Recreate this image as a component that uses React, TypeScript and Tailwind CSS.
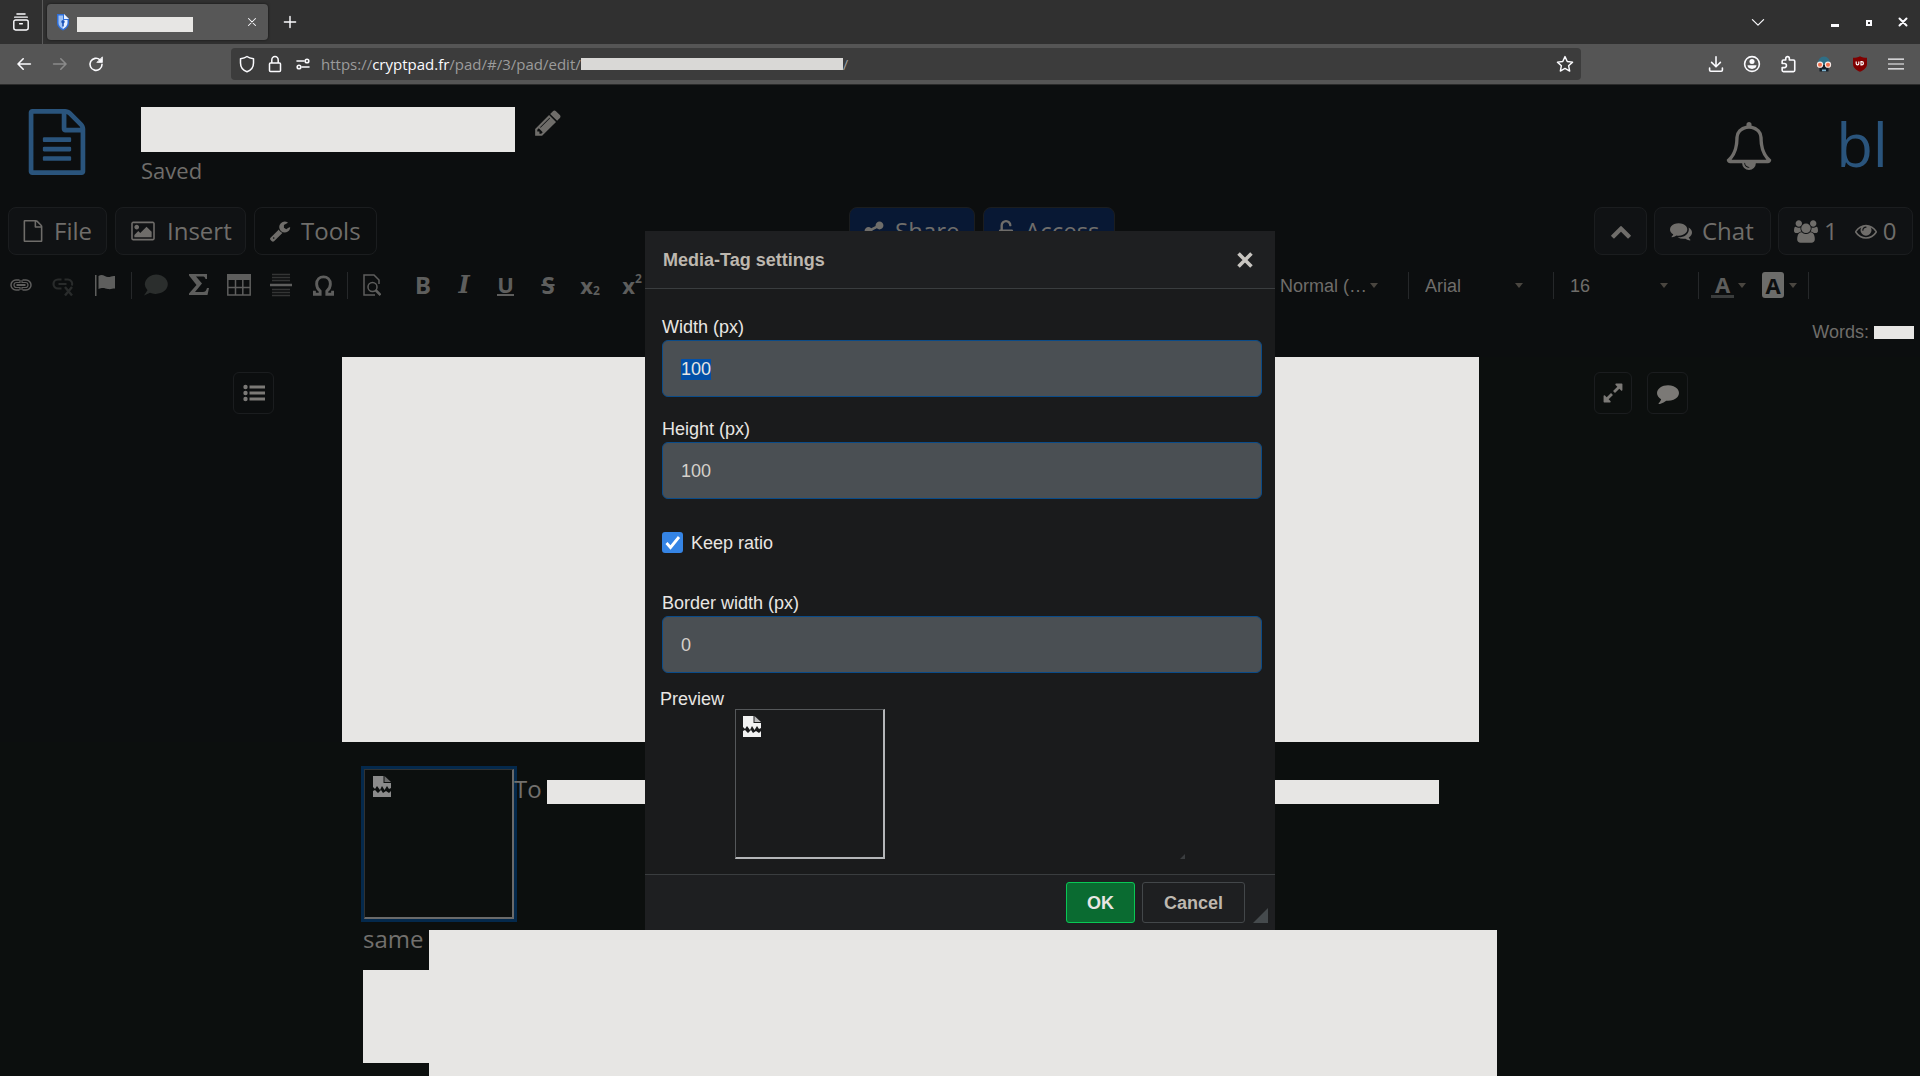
import { useEffect, useRef } from "react";
import type { ReactNode } from "react";

const P = {
  fileText:
    "M1596 380q28 28 48 76t20 88v1152q0 40-28 68t-68 28h-1344q-40 0-68-28t-28-68v-1600q0-40 28-68t68-28h896q40 0 88 20t76 48zm-444-244v376h376q-10-29-22-41l-313-313q-12-12-41-22zm384 1528v-1024h-416q-40 0-68-28t-28-68v-416h-768v1536h1280zm-1024-864q0-14 9-23t23-9h704q14 0 23 9t9 23v64q0 14-9 23t-23 9h-704q-14 0-23-9t-9-23v-64zm736 224q14 0 23 9t9 23v64q0 14-9 23t-23 9h-704q-14 0-23-9t-9-23v-64q0-14 9-23t23-9h704zm0 256q14 0 23 9t9 23v64q0 14-9 23t-23 9h-704q-14 0-23-9t-9-23v-64q0-14 9-23t23-9h704z",
  file: "M1596 380q28 28 48 76t20 88v1152q0 40-28 68t-68 28h-1344q-40 0-68-28t-28-68v-1600q0-40 28-68t68-28h896q40 0 88 20t76 48zm-444-244v376h376q-10-29-22-41l-313-313q-12-12-41-22zm384 1528v-1024h-416q-40 0-68-28t-28-68v-416h-768v1536h1280z",
  bell: "M912 1696q0-16-16-16-59 0-101.5-42.5t-42.5-101.5q0-16-16-16t-16 16q0 73 51.5 124.5t124.5 51.5q16 0 16-16zm-666-288h1300q-266-300-266-832 0-51-24-105t-69-103-121.5-80.5-169.5-31.5-169.5 31.5-121.5 80.5-69 103-24 105q0 532-266 832zm1482 0q0 52-38 90t-90 38h-448q0 106-75 181t-181 75-181-75-75-181h-448q-52 0-90-38t-38-90q50-42 91-88t85-119.5 74.5-158.5 50-206 19.5-260q0-152 117-282.5t307-158.5q-8-19-8-39 0-40 28-68t68-28 68 28 28 68q0 20-8 39 190 28 307 158.5t117 282.5q0 139 19.5 260t50 206 74.5 158.5 85 119.5 91 88z",
  pencil:
    "M491 1536l91-91-235-235-91 91v107h128v128h107zm523-928q0-22-22-22-10 0-17 7l-542 542q-7 7-7 17 0 22 22 22 10 0 17-7l542-542q7-7 7-17zm-54-192l416 416-832 832h-416v-416zm683 96q0 53-37 90l-166 166-416-416 166-165q36-38 90-38 53 0 91 38l235 234q37 39 37 91z",
  picture:
    "M576 576q0 80-56 136t-136 56-136-56-56-136 56-136 136-56 136 56 56 136zm1024 384v448h-1408v-192l320-320 160 160 512-512zm96-704h-1600q-13 0-22.5 9.5t-9.5 22.5v1216q0 13 9.5 22.5t22.5 9.5h1600q13 0 22.5-9.5t9.5-22.5v-1216q0-13-9.5-22.5t-22.5-9.5zm160 32v1216q0 66-47 113t-113 47h-1600q-66 0-113-47t-47-113v-1216q0-66 47-113t113-47h1600q66 0 113 47t47 113z",
  wrench:
    "M448 1472q0-26-19-45t-45-19-45 19-19 45 19 45 45 19 45-19 19-45zm644-420l-682 682q-37 37-90 37-52 0-91-37l-106-108q-38-36-38-90 0-53 38-91l681-681q39 98 114.5 173.5t173.5 114.5zm634-435q0 39-23 106-47 134-164.5 217.5t-258.5 83.5q-185 0-316.5-131.5t-131.5-316.5 131.5-316.5 316.5-131.5q58 0 121.5 16.5t107.5 46.5q16 11 16 28t-16 28l-293 169v224l193 107q5-3 79-48.5t135.5-81 70.5-35.5q15 0 23.5 10t8.5 25z",
  chevronUp:
    "M1683 1331l-166 165q-19 19-45 19t-45-19l-531-531-531 531q-19 19-45 19t-45-19l-166-165q-19-19-19-45.5t19-45.5l742-741q19-19 45-19t45 19l742 741q19 19 19 45.5t-19 45.5z",
  comment:
    "M1792 896q0 174-120 321.5t-326 233-450 85.5q-70 0-145-8-198 175-460 242-49 14-114 22-17 2-30.5-9t-17.5-29v-1q-3-4-.5-12t2-10 4.5-9.5l6-9 7-8.5 8-9q7-8 31-34.5t34.5-38 31-39.5 32.5-51 27-59 26-76q-157-89-247.5-220t-90.5-281q0-130 71-248.5t191-204.5 286-136.5 348-50.5q244 0 450 85.5t326 233 120 321.5z",
  comments:
    "M1408 768q0 139-94 257t-256.5 186.5-353.5 68.5q-86 0-176-16-124 88-278 128-36 9-86 16h-3q-11 0-20.5-8t-11.5-21q-1-3-1-6.5t.5-6.5 2-6l2.5-5 3.5-5.5 4-5 4.5-5 4-4.5q5-6 23-25t26-29.5 22.5-29 25-38.5 20.5-44q-124-72-195-177t-71-224q0-139 94-257t256.5-186.5 353.5-68.5 353.5 68.5 256.5 186.5 94 257zm384 256q0 120-71 224.5t-195 176.5q10 24 20.5 44t25 38.5 22.5 29 26 29.5 23 25q1 1 4 4.5t4.5 5 4 5 3.5 5.5l2.5 5 2 6 .5 6.5-1 6.5q-3 14-13 22t-22 7q-50-7-86-16-154-40-278-128-90 16-176 16-271 0-472-132 58 4 88 4 161 0 309-45t264-129q125-92 192-212t67-254q0-77-23-152 129 71 204 178t75 230z",
  eye: "M1664 960q-152-236-381-353 61 104 61 225 0 185-131.5 316.5t-316.5 131.5-316.5-131.5-131.5-316.5q0-121 61-225-229 117-381 353 133 205 333.5 326.5t434.5 121.5 434.5-121.5 333.5-326.5zm-720-384q0-20-14-34t-34-14q-125 0-214.5 89.5t-89.5 214.5q0 20 14 34t34 14 34-14 14-34q0-86 61-147t147-61q20 0 34-14t14-34zm848 384q0 34-20 69-140 230-376.5 368.5t-499.5 138.5-499.5-139-376.5-368q-20-35-20-69t20-69q140-229 376.5-368t499.5-139 499.5 139 376.5 368q20 35 20 69z",
  users:
    "M593 896q-162 5-265 128h-134q-82 0-138-40.5t-56-118.5q0-353 124-353 6 0 43.5 21t97.5 42.5 119 21.5q67 0 133-23-5 37-5 66 0 139 81 256zm1071 637q0 120-73 189.5t-194 69.5h-874q-121 0-194-69.5t-73-189.5q0-53 3.5-103.5t14-109 26.5-108.5 43-97.5 62-81 85.5-53.5 111.5-20q10 0 43 21.5t73 48 107 48 135 21.5 135-21.5 107-48 73-48 43-21.5q61 0 111.5 20t85.5 53.5 62 81 43 97.5 26.5 108.5 14 109 3.5 103.5zm-1024-1277q0 106-75 181t-181 75-181-75-75-181 75-181 181-75 181 75 75 181zm704 384q0 159-112.5 271.5t-271.5 112.5-271.5-112.5-112.5-271.5 112.5-271.5 271.5-112.5 271.5 112.5 112.5 271.5zm576 225q0 78-56 118.5t-138 40.5h-134q-103-123-265-128 81-117 81-256 0-29-5-66 66 23 133 23 59 0 119-21.5t97.5-42.5 43.5-21q124 0 124 353zm-128-609q0 106-75 181t-181 75-181-75-75-181 75-181 181-75 181 75 75 181z",
  expand:
    "M883 1056q0 13-10 23l-332 332 144 144q19 19 19 45t-19 45-45 19h-448q-26 0-45-19t-19-45v-448q0-26 19-45t45-19 45 19l144 144 332-332q10-10 23-10t23 10l114 114q10 10 10 23zm781-864v448q0 26-19 45t-45 19-45-19l-144-144-332 332q-10 10-23 10t-23-10l-114-114q-10-10-10-23t10-23l332-332-144-144q-19-19-19-45t19-45 45-19h448q26 0 45 19t19 45z",
  share:
    "M1344 1024q133 0 226.5 93.5t93.5 226.5-93.5 226.5-226.5 93.5-226.5-93.5-93.5-226.5q0-12 2-34l-360-180q-92 86-218 86-133 0-226.5-93.5t-93.5-226.5 93.5-226.5 226.5-93.5q126 0 218 86l360-180q-2-22-2-34 0-133 93.5-226.5t226.5-93.5 226.5 93.5 93.5 226.5-93.5 226.5-226.5 93.5q-126 0-218-86l-360 180q2 22 2 34t-2 34l360 180q92-86 218-86z",
  unlock:
    "M1376 768q40 0 68 28t28 68v576q0 40-28 68t-68 28h-960q-40 0-68-28t-28-68v-576q0-40 28-68t68-28h32v-320q0-185 131.5-316.5t316.5-131.5 316.5 131.5 131.5 316.5q0 26-19 45t-45 19h-64q-26 0-45-19t-19-45q0-106-75-181t-181-75-181 75-75 181v320h736z",
};

function Fa({ d, className, box = "0 0 1792 1792" }: { d: string; className: string; box?: string }) {
  return (
    <svg viewBox={box} className={`shrink-0 fill-current ${className}`} aria-hidden="true">
      <path d={d} />
    </svg>
  );
}

function Line({ children, className = "size-5", w = 1.5 }: { children: ReactNode; className?: string; w?: number }) {
  return (
    <svg
      viewBox="0 0 20 20"
      className={`shrink-0 ${className}`}
      fill="none"
      stroke="currentColor"
      strokeWidth={w}
      strokeLinecap="round"
      strokeLinejoin="round"
      aria-hidden="true"
    >
      {children}
    </svg>
  );
}

function ChromeBtn({ label, children, className = "w-9" }: { label: string; children: ReactNode; className?: string }) {
  return (
    <button aria-label={label} className={`flex h-9 shrink-0 items-center justify-center ${className}`}>
      {children}
    </button>
  );
}

function BrowserChrome() {
  return (
    <header className="font-['Open_Sans'] text-[#fbfbfe]">
      <div className="flex h-11 items-center bg-[#303030]">
        <ChromeBtn label="Recent browsing" className="w-[42px]">
          <Line className="size-[18px]" w={1.6}>
            <path d="M5.5 1.2h9M3 4.6h14M4 7.8h12a2 2 0 0 1 2 2v7a2 2 0 0 1-2 2H4a2 2 0 0 1-2-2v-7a2 2 0 0 1 2-2zM8.5 12h3" />
          </Line>
        </ChromeBtn>
        <div className="h-full w-px bg-[#5a5a5a]" />
        <div className="ml-1 flex h-9 w-[221px] items-center rounded bg-[#575757] px-2 shadow-[0_0_3px_rgba(0,0,0,0.6)]">
          <svg viewBox="0 0 16 18" className="h-[18px] w-4 shrink-0" aria-hidden="true">
            <path d="M2 1h7l5 5v4c0 3.500-3 6-6 7.500C5 16 2 13.500 2 10z" fill="#2f6fd8" />
            <path d="M3.500 2.500H8V16C5.500 14.500 3.500 12.500 3.500 10z" fill="#9fc2f5" />
            <path d="M9 1v5h5z" fill="#e9f1ff" />
            <path d="M8 7h4.500v3C12.500 12.500 10.500 14.500 8 16z" fill="#e9f1ff" />
            <circle cx="8" cy="8.800" r="1.700" fill="#1d54b8" />
            <path d="M7.200 9.500h1.600v4H7.200z" fill="#1d54b8" />
          </svg>
          <div className="mt-[5px] ml-[6px] h-[15px] w-[116px] bg-[#e7e6e4]" />
          <button aria-label="Close tab" className="ml-auto flex size-4 items-center justify-center">
            <Line className="size-[14px]">
              <path d="M5 5l10 10M15 5L5 15" />
            </Line>
          </button>
        </div>
        <ChromeBtn label="New tab" className="ml-1 w-9">
          <Line className="size-4" w={1.8}>
            <path d="M10 3v14M3 10h14" />
          </Line>
        </ChromeBtn>
        <div className="flex-1" />
        <ChromeBtn label="List all tabs">
          <Line className="size-4">
            <path d="M3 7l7 7 7-7" />
          </Line>
        </ChromeBtn>
        <div className="ml-[42px] flex items-center">
          <ChromeBtn label="Minimize" className="w-[34px]">
            <span className="mt-[6px] block h-[3px] w-2 bg-[#fbfbfe]" />
          </ChromeBtn>
          <ChromeBtn label="Maximize" className="w-[34px]">
            <span className="mt-[2px] block size-[6px] border-2 border-[#fbfbfe]" />
          </ChromeBtn>
          <ChromeBtn label="Close window" className="w-[34px]">
            <Line className="size-[10px]" w={4}>
              <path d="M3 3l14 14M17 3L3 17" />
            </Line>
          </ChromeBtn>
        </div>
      </div>
      <div className="flex h-[41px] items-center border-b border-[#2b2b2b] bg-[#555555] px-1.5">
        <ChromeBtn label="Back">
          <Line className="size-4" w={2}>
            <path d="M18 10H3M9 3.500L2.500 10 9 16.500" />
          </Line>
        </ChromeBtn>
        <ChromeBtn label="Forward">
          <Line className="size-4 text-[#8a8a8a]" w={2}>
            <path d="M2 10h15M11 3.500l6.500 6.500-6.500 6.500" />
          </Line>
        </ChromeBtn>
        <ChromeBtn label="Reload">
          <Line className="size-4" w={2}>
            <path d="M17.500 10.500A7.500 7.500 0 1 1 15 4.800" />
            <path d="M18 1.500v6.500h-6.500z" fill="currentColor" strokeWidth="1" />
          </Line>
        </ChromeBtn>
        <div className="ml-[117px] flex h-8 min-w-0 flex-1 items-center rounded bg-[#3c3c3c] pl-1.5">
          <Line className="size-5" w={1.5}>
            <path d="M10 2.500c2 1.600 4.500 2 6.500 2.200V9c0 4.500-3 7.500-6.500 8.800C6.500 16.500 3.500 13.500 3.500 9V4.700C5.500 4.500 8 4.100 10 2.500z" />
          </Line>
          <Line className="ml-2 size-5" w={1.5}>
            <path d="M5.500 9h9a1 1 0 0 1 1 1v6.500a1 1 0 0 1-1 1h-9a1 1 0 0 1-1-1V10a1 1 0 0 1 1-1zM6.800 9V6a3.200 3.500 0 0 1 6.400 0v3" />
          </Line>
          <Line className="ml-2 size-5" w={1.6}>
            <path d="M4 7h7M9 13h7" />
            <circle cx="14" cy="7" r="1.800" />
            <circle cx="6" cy="13" r="1.800" />
          </Line>
          <div className="ml-2 flex items-center text-[15px] whitespace-nowrap text-[#9b9b9b]">
            <span>https://</span>
            <span className="text-[#fbfbfe]">cryptpad.fr</span>
            <span>/pad/#/3/pad/edit/</span>
            <span className="h-3 w-[262px] bg-[#d9d8d6]" />
            <span>/</span>
          </div>
          <ChromeBtn label="Bookmark this page" className="ml-auto w-8">
            <Line className="size-[18px]" w={1.6}>
              <path d="M10 1.800l2.500 5.400 5.900.7-4.400 4 1.200 5.900L10 14.900l-5.200 2.900L6 11.900l-4.400-4 5.900-.7z" />
            </Line>
          </ChromeBtn>
        </div>
        <div className="ml-[117px] flex">
          <ChromeBtn label="Downloads">
            <Line className="size-4" w={2}>
              <path d="M10 1v12M4.500 8L10 13.500 15.500 8M2 15v2.500A1.500 1.500 0 0 0 3.500 19h13a1.500 1.500 0 0 0 1.500-1.500V15" />
            </Line>
          </ChromeBtn>
          <ChromeBtn label="Account">
            <svg viewBox="0 0 20 20" className="size-[18px]" aria-hidden="true">
              <circle cx="10" cy="10" r="8.200" fill="none" stroke="currentColor" strokeWidth="1.800" />
              <circle cx="10" cy="7.300" r="2.800" fill="currentColor" />
              <path d="M5 11.500h10c0 2.500-2.200 4-5 4s-5-1.500-5-4z" fill="currentColor" />
            </svg>
          </ChromeBtn>
          <ChromeBtn label="Extensions">
            <Line className="size-[18px]" w={1.8}>
              <path d="M7.500 5.500V3.800a2 2 0 0 1 4 0v1.700H16a1.500 1.500 0 0 1 1.500 1.500v10a1.500 1.500 0 0 1-1.500 1.500H5A1.500 1.500 0 0 1 3.500 17v-3H6a2 2 0 0 0 0-4.500H3.500V7A1.500 1.500 0 0 1 5 5.500z" />
            </Line>
          </ChromeBtn>
          <ChromeBtn label="Privacy extension">
            <svg viewBox="0 0 16 16" className="size-4" aria-hidden="true">
              <path d="M1.500 8.500a6.500 8 0 0 1 13 0z" fill="#2f6f86" />
              <path d="M3.500 9h9v6.500h-9z" fill="#15202a" />
              <path d="M6 13.500h4v1.700H6z" fill="#7fb4d0" />
              <circle cx="4" cy="8.700" r="2.600" fill="#f0714f" stroke="#f5e9e6" strokeWidth="1.100" />
              <circle cx="12" cy="8.700" r="2.600" fill="#f0714f" stroke="#f5e9e6" strokeWidth="1.100" />
            </svg>
          </ChromeBtn>
          <ChromeBtn label="uBlock Origin">
            <svg viewBox="0 0 16 16" className="size-4" aria-hidden="true">
              <path d="M8 .3c2 1.200 4.500 1.500 7 1.500V8c0 4-3.500 6.300-7 7.700C4.500 14.300 1 12 1 8V1.800C3.500 1.800 6 1.500 8 .3z" fill="#800000" />
              <path d="M4.200 5.500V7.500a1.300 1.300 0 0 0 2.600 0V5.500" fill="none" stroke="#fff" strokeWidth="1.200" />
              <path d="M9 5.600h.8a1.600 1.600 0 0 1 0 3.200H9z" fill="none" stroke="#fff" strokeWidth="1.200" />
            </svg>
          </ChromeBtn>
          <ChromeBtn label="Application menu">
            <Line className="size-4" w={1.5}>
              <path d="M0 4h20M0 10h20M0 16h20" />
            </Line>
          </ChromeBtn>
        </div>
      </div>
    </header>
  );
}

function PadHeader() {
  return (
    <div className="flex pt-[22px] font-['Open_Sans'] text-[#6f6d6a]">
      <div className="flex w-[141px] shrink-0 pt-0.5 pl-6">
        <Fa d={P.fileText} className="size-[66px] text-[#2a547c]" />
      </div>
      <div>
        <div className="flex">
          <div className="h-[45px] w-[374px] bg-[#e7e6e4]" />
          <button aria-label="Rename" className="ml-[18px] flex h-8 items-center">
            <Fa d={P.pencil} className="size-[30px]" />
          </button>
        </div>
        <p className="mt-[3px] text-[22px] leading-[30px]">Saved</p>
      </div>
      <div className="ml-auto flex h-[77px] items-center pr-8">
        <button aria-label="Notifications">
          <Fa d={P.bell} className="size-12" />
        </button>
        <button className="ml-[63px] pb-1 text-[60px] leading-[60px] text-[#2a547c]">bl</button>
      </div>
    </div>
  );
}

const padBtn =
  "flex h-12 shrink-0 items-center rounded-lg border border-[#1b1d1f] text-2xl whitespace-nowrap";

function PadToolbar() {
  return (
    <div className="flex items-center justify-between pr-[7px] pl-2 font-['Open_Sans'] text-[#6f6d6a]">
      <div className="flex items-center gap-2">
        <button className={`${padBtn} w-[99px] gap-[10px] bg-[#101214] pl-[13px]`}>
          <Fa d={P.file} className="size-[22px]" />
          File
        </button>
        <button className={`${padBtn} w-[131px] gap-3 bg-[#101214] pl-[15px]`}>
          <Fa d={P.picture} box="-64 0 1920 1792" className="h-[22px] w-6" />
          Insert
        </button>
        <button className={`${padBtn} w-[123px] gap-[10px] pl-[14px]`}>
          <Fa d={P.wrench} className="size-[22px]" />
          Tools
        </button>
      </div>
      <div className="mr-[7px] flex gap-2">
        <button className={`${padBtn} w-[126px] gap-[10px] border-[#0a2244] bg-[#081834] pl-[13px]`}>
          <Fa d={P.share} className="size-[22px]" />
          Share
        </button>
        <button className={`${padBtn} w-[132px] gap-2 border-[#0a2244] bg-[#081834] pl-[11px]`}>
          <Fa d={P.unlock} className="size-[22px]" />
          Access
        </button>
      </div>
      <div className="flex justify-end gap-[7px]">
        <button aria-label="Collapse toolbar" className={`${padBtn} w-[53px] justify-center bg-[#101214]`}>
          <Fa d={P.chevronUp} className="size-[22px]" />
        </button>
        <button className={`${padBtn} w-[117px] gap-[10px] bg-[#101214] pl-[15px]`}>
          <Fa d={P.comments} className="size-[22px]" />
          Chat
        </button>
        <button className={`${padBtn} w-[135px] bg-[#101214] pl-[15px]`}>
          <Fa d={P.users} box="0 0 1920 1792" className="mr-[6px] h-[25px] w-6" />
          1
          <Fa d={P.eye} className="mr-[6px] ml-[17px] size-[22px]" />
          0
        </button>
      </div>
    </div>
  );
}

function Tool({ label, children, className = "w-[42px]" }: { label: string; children: ReactNode; className?: string }) {
  return (
    <button aria-label={label} className={`flex h-8 shrink-0 items-center justify-center ${className}`}>
      {children}
    </button>
  );
}

function Sep() {
  return <span className="h-[27px] w-px shrink-0 bg-[#26282a]" />;
}

function Caret() {
  return <span className="block border-x-4 border-t-[5px] border-x-transparent border-t-[#4a4640]" />;
}

function Combo({ label, value, className }: { label: string; value: string; className: string }) {
  return (
    <label className={`flex shrink-0 items-center text-[#6f6d6a] ${className}`}>
      <select aria-label={label} className="min-w-0 flex-1 appearance-none bg-transparent pt-[3px] text-[18px] outline-none">
        <option>{value}</option>
      </select>
      <Caret />
    </label>
  );
}

function EditorToolbar() {
  return (
    <div className="mt-[14px] flex h-8 items-center font-['Liberation_Sans'] text-[#5e5e5d]">
      <Tool label="Link">
        <svg viewBox="0 0 22 12" className="h-3 w-[22px]" fill="none" stroke="currentColor" aria-hidden="true">
          <path d="M9.500 1H6a5 5 0 0 0 0 10h3.500M12.500 1H16a5 5 0 0 1 0 10h-3.500" strokeWidth="1.500" />
          <path d="M10.500 3.500H6.500a2.500 2.500 0 0 0 0 5h4M11.500 3.500h4a2.500 2.500 0 0 1 0 5h-4M10 1v3M12 1v3M10 8v3M12 8v3" strokeWidth="1.200" />
          <path d="M6.500 6h9" strokeWidth="2" />
        </svg>
      </Tool>
      <Tool label="Unlink">
        <svg viewBox="0 0 22 20" className="mt-[6px] h-5 w-[22px] text-[#292b2b]" fill="none" stroke="currentColor" aria-hidden="true">
          <path d="M9.500 1.500H6a4.500 4.500 0 0 0 0 9h3.500M12.500 1.500H16a4.500 4.500 0 0 1 4 6" strokeWidth="2.200" />
          <path d="M6.500 6h8" strokeWidth="2" />
          <path d="M13 9l7 8.500M20 9l-7 8.500" strokeWidth="2.400" />
        </svg>
      </Tool>
      <Tool label="Anchor">
        <svg viewBox="0 0 22 24" className="h-6 w-[22px] fill-current" aria-hidden="true">
          <path d="M1 2h1.500v21H1zM4.500 3c4-3 6.500 1 9.500 1s4-1.500 7-1v12.500c-3 0-4 1-7 .5-3-.6-5-2-9.500 0z" />
        </svg>
      </Tool>
      <span className="ml-[5px]" />
      <Sep />
      <Tool label="Comment" className="w-[48px]">
        <svg viewBox="0 0 24 24" className="size-6 fill-[#2b2e2d]" aria-hidden="true">
          <path d="M12 1.500a12 9.700 0 1 1-6 18.200L0 22.500l3.500-5.300A12 9.700 0 0 1 12 1.500z" />
        </svg>
      </Tool>
      <Tool label="Math" className="w-[38px]">
        <svg viewBox="0 0 20 22" className="h-[22px] w-5 fill-current" aria-hidden="true">
          <path d="M0 0h18v5h-1.500c-.5-2-1.500-2.500-3-2.500H7l6 7-7 8.500h8c2 0 3-1 4-4H20L18.500 21H0v-1.500l7.500-8.500L0 1.500z" />
        </svg>
      </Tool>
      <Tool label="Table">
        <svg viewBox="0 0 24 22" className="h-[22px] w-6" aria-hidden="true">
          <path d="M.8 6V21h22.400V6M.8 13.500h22.400M8.500 6v15M15.800 6v15" fill="none" stroke="currentColor" strokeWidth="1.500" />
          <path d="M0 0h24v6H0z" fill="currentColor" />
        </svg>
      </Tool>
      <Tool label="Horizontal line">
        <svg viewBox="0 0 22 24" className="h-6 w-[22px]" aria-hidden="true">
          <path d="M2 1.500h18M2 4.500h18M2 7.500h18M2 16.500h18M2 19.500h18M2 22.500h18" stroke="#343535" strokeWidth="1.500" />
          <path d="M0 12h22" stroke="currentColor" strokeWidth="2.500" />
        </svg>
      </Tool>
      <Tool label="Special character" className="w-[43px]">
        <svg viewBox="0 0 22 22" className="size-[21px]" fill="none" stroke="currentColor" strokeWidth="3" aria-hidden="true">
          <path d="M1.500 16.500v3.700H7.500V17C5 15 3.800 12.500 3.800 9.500 3.800 5 7 2 11 2s7.200 3 7.200 7.500c0 3-1.200 5.500-3.700 7.500v3.200h6v-3.700" />
        </svg>
      </Tool>
      <span className="ml-[2px]" />
      <Sep />
      <Tool label="Find" className="w-[47px]">
        <svg viewBox="0 0 18 22" className="h-[22px] w-[18px]" fill="none" stroke="currentColor" strokeWidth="1.500" aria-hidden="true">
          <path d="M12 21H1V1h10l5 5v4" />
          <circle cx="9.500" cy="13" r="4.500" strokeWidth="1.500" />
          <path d="M12.500 16l5 5" strokeWidth="2.500" />
        </svg>
      </Tool>
      <Tool label="Bold" className="ml-[7px] w-[42px]">
        <b className="font-['Noto_Sans'] text-2xl leading-6">B</b>
      </Tool>
      <Tool label="Italic" className="w-[40px]">
        <b className="font-['DejaVu_Serif'] text-[24px] leading-6 italic">I</b>
      </Tool>
      <Tool label="Underline" className="w-[43px]">
        <b className="border-b-2 border-current font-['Noto_Sans'] text-[22px] leading-[20px]">U</b>
      </Tool>
      <Tool label="Strike">
        <b className="font-['Noto_Sans'] text-2xl leading-6 line-through decoration-2">S</b>
      </Tool>
      <Tool label="Subscript">
        <b className="flex items-end font-['Noto_Sans'] text-[22px] leading-6">
          x<span className="text-xs leading-3">2</span>
        </b>
      </Tool>
      <Tool label="Superscript">
        <b className="flex items-start font-['Noto_Sans'] text-[22px] leading-6">
          x<span className="text-xs leading-3">2</span>
        </b>
      </Tool>
      <span className="flex-1" />
      <Combo label="Paragraph format" value="Normal (…" className="w-[98px]" />
      <span className="ml-[30px]" />
      <Sep />
      <Combo label="Font name" value="Arial" className="ml-4 w-[98px]" />
      <span className="ml-[30px]" />
      <Sep />
      <Combo label="Font size" value="16" className="ml-4 w-[98px]" />
      <span className="ml-[30px]" />
      <Sep />
      <button aria-label="Text color" className="ml-3 flex items-center gap-[4px]">
        <span className="flex w-[23px] flex-col items-center">
          <b className="font-['Noto_Sans'] text-[22px] leading-[22px]">A</b>
          <span className="h-[3px] w-full bg-[#3a3c3c]" />
        </span>
        <Caret />
      </button>
      <button aria-label="Background color" className="ml-4 flex items-center gap-[5px]">
        <b className="flex h-[26px] w-[22px] items-center justify-center rounded-[3px] bg-[#6c6c6a] font-['Noto_Sans'] text-[22px] leading-[26px] text-[#0c0e0f]">
          A
        </b>
        <Caret />
      </button>
      <span className="ml-[11px]" />
      <Sep />
      <span className="w-[111px]" />
    </div>
  );
}

function BrokenImage({ className }: { className: string }) {
  return (
    <svg viewBox="0 0 18 21" className={`h-[21px] w-[18px] fill-current ${className}`} aria-hidden="true">
      <path d="M0 0h10.500v7H18v5l-2 1-2-3-2.500 4-2.500-4-2 4-3-4-2 3-2-2z" />
      <path d="M11.500 0L18 6h-6.500z" opacity=".75" />
      <path d="M0 15l2-1 3 3 3-3 2 3 3-2 3 2 2-2v6H0z" />
    </svg>
  );
}

const sideBtn =
  "flex h-[42px] items-center justify-center rounded-md border border-[#1b1d1f] text-[#7b7976]";

function Document() {
  return (
    <main className="flex flex-1 flex-col bg-[#0c0f0e] font-['Open_Sans'] text-2xl text-[#72706d]">
      <div className="flex">
        <aside className="flex w-[342px] shrink-0 bg-[#0c0e0f] pt-[15px] pl-[233px]">
          <button aria-label="Outline" className={`${sideBtn} w-[41px]`}>
            <svg viewBox="0 0 22 18" className="h-[18px] w-[22px] fill-current" aria-hidden="true">
              <circle cx="2.500" cy="3" r="2.200" />
              <circle cx="2.500" cy="9" r="2.200" />
              <circle cx="2.500" cy="15" r="2.200" />
              <path d="M6.500 1.500H22v3H6.500zM6.500 7.500H22v3H6.500zM6.500 13.500H22v3H6.500z" />
            </svg>
          </button>
        </aside>
        <div className="h-[385px] flex-1 bg-[#e7e6e4]" />
        <aside className="flex w-[441px] shrink-0 items-start gap-[15px] pt-[15px] pl-[115px]">
          <button aria-label="Expand" className={`${sideBtn} w-[38px]`}>
            <Fa d={P.expand} className="size-[22px]" />
          </button>
          <button aria-label="Comments" className={`${sideBtn} w-[41px]`}>
            <Fa d={P.comment} className="size-[22px]" />
          </button>
        </aside>
      </div>
      <div className="flex items-start pt-6 pr-[481px] pl-[361px]">
        <div className="size-[156px] shrink-0 border-[3px] border-[#04294c]">
          <div className="size-[150px] border border-r-2 border-b-2 border-[#303334] border-r-[#6a6a6a] border-b-[#6a6a6a] p-2 pt-1.5">
            <BrokenImage className="text-[#8b8b8b]" />
          </div>
        </div>
        <span className="mt-[7px] -ml-[3px] w-[33px] leading-8">To</span>
        <div className="mt-[14px] h-6 flex-1 bg-[#e7e6e4]" />
      </div>
      <div className="mt-2 flex flex-1 pr-[423px] pl-[363px]">
        <div className="w-[66px] shrink-0">
          <p className="h-10 leading-[18px]">same</p>
          <div className="h-[93px] bg-[#e7e6e4]" />
        </div>
        <div className="flex-1 bg-[#e7e6e4]" />
      </div>
    </main>
  );
}

function Field({ id, label, value, inputRef }: { id: string; label: string; value: string; inputRef?: React.Ref<HTMLInputElement> }) {
  return (
    <div>
      <label htmlFor={id} className="block leading-[26px]">
        {label}
      </label>
      <input
        id={id}
        ref={inputRef}
        defaultValue={value}
        className="block h-[57px] w-full rounded-md border border-[#0a4b88] bg-[#4a4f53] px-[18px] pt-0.5 leading-[26px] text-[#d5d1cb] outline-none selection:bg-[#0350a8] selection:text-[#e8e6e3]"
      />
    </div>
  );
}

function MediaTagDialog() {
  const widthRef = useRef<HTMLInputElement>(null);
  useEffect(() => {
    widthRef.current?.focus();
    widthRef.current?.select();
  }, []);
  return (
    <div
      role="dialog"
      aria-labelledby="dialog-title"
      className="w-[630px] bg-[#1a1b1c] font-['Liberation_Sans'] text-[18px] text-[#e8e6e3]"
    >
      <div className="flex h-[58px] items-center border-b border-[#3a3d3f] bg-[#1e1f21] pr-[22px] pl-[18px]">
        <h2 id="dialog-title" className="pt-0.5 font-bold text-[#bdb7af]">
          Media-Tag settings
        </h2>
        <button aria-label="Close" className="mt-px ml-auto flex size-4 items-center justify-center text-[#c8c5c1]">
          <Line className="size-4" w={4.5}>
            <path d="M3.500 3.500l13 13M16.500 3.500l-13 13" strokeLinecap="square" />
          </Line>
        </button>
      </div>
      <div className="flex h-[585px] flex-col pt-[25px] pr-[13px] pl-[17px]">
        <Field id="width" label="Width (px)" value="100" inputRef={widthRef} />
        <div className="mt-[19px]">
          <Field id="height" label="Height (px)" value="100" />
        </div>
        <label className="mt-[33px] flex h-[21px] items-center gap-2">
          <span className="grid size-[21px]">
            <input
              type="checkbox"
              defaultChecked
              className="col-start-1 row-start-1 size-[21px] appearance-none rounded-[3px] bg-[#3584e4]"
            />
            <svg viewBox="0 0 21 21" className="pointer-events-none col-start-1 row-start-1" aria-hidden="true">
              <path d="M4.500 11l4 4.500 8.500-10.500" fill="none" stroke="#fff" strokeWidth="2.800" />
            </svg>
          </span>
          <span className="pt-0.5">Keep ratio</span>
        </label>
        <div className="mt-[37px]">
          <Field id="border" label="Border width (px)" value="0" />
        </div>
        <p className="mt-4 -ml-0.5 leading-5">Preview</p>
        <div className="mr-[77px] ml-[73px] flex items-end">
          <div className="size-[150px] border border-r-2 border-b-2 border-[#55585a] border-r-[#b4b6b8] border-b-[#b4b6b8] p-[7px] pt-1.5">
            <BrokenImage className="text-[#f2f2f2]" />
          </div>
          <svg viewBox="0 0 6 6" className="ml-auto size-[5px] fill-[#3a3d3f]" aria-hidden="true">
            <path d="M6 0v6H0z" />
          </svg>
        </div>
      </div>
      <div className="flex h-14 items-end border-t border-[#3a3d3f] bg-[#1e1f21] pr-[7px] pb-[7px]">
        <button className="ml-auto h-[41px] w-[69px] rounded-[3px] border border-[#09c855] bg-[#0a6b31] pt-0.5 font-bold text-[#e8e6e3]">
          OK
        </button>
        <button className="ml-[7px] h-[41px] w-[103px] rounded-[3px] border border-[#43474a] pt-0.5 font-bold text-[#bdb7af]">
          Cancel
        </button>
        <svg viewBox="0 0 15 18" className="ml-2 h-[18px] w-[15px] fill-[#454a4d]" aria-hidden="true">
          <path d="M15 3v15H0z" />
        </svg>
      </div>
    </div>
  );
}

export default function App() {
  return (
    <div className="relative flex min-h-screen flex-col overflow-hidden bg-[#0c0e0f]">
      <BrowserChrome />
      <PadHeader />
      <div className="mt-[22px]">
        <PadToolbar />
      </div>
      <EditorToolbar />
      <div className="mt-5 mb-[13px] flex h-[23px] items-center justify-end pr-[6px] font-['Liberation_Sans'] text-[18px] text-[#6f6d6a]">
        Words:
        <span className="ml-[5px] h-[13px] w-10 bg-[#e7e6e4]" />
      </div>
      <Document />
      <div className="absolute inset-x-0 top-[231px] flex justify-center">
        <MediaTagDialog />
      </div>
    </div>
  );
}
